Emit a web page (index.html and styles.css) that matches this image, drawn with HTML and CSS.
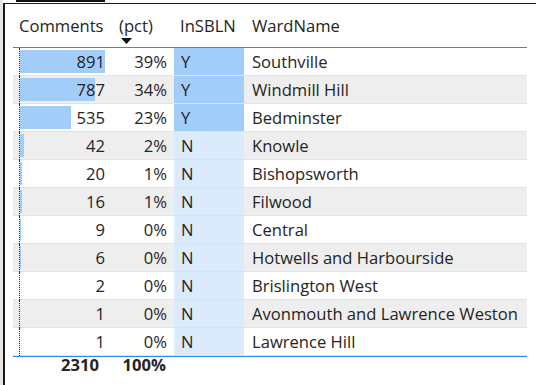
FILE: index.html
```html
<!DOCTYPE html>
<html>
<head>
<meta charset="utf-8">
<link rel="stylesheet" href="styles.css">
</head>
<body>
<div class="tab"></div>
<div class="frame">
  <div class="table">
    <div class="head">
      <div class="hcell">Comments</div>
      <div class="hcell sorted">
        <span>(pct)</span>
        <svg class="sort" width="11" height="6" viewBox="0 0 11 6"><path d="M0 0H11L5.5 6Z" fill="#111"/></svg>
      </div>
      <div class="hcell">InSBLN</div>
      <div class="hcell ward">WardName</div>
    </div>

    <div class="row">
      <div class="cell num com"><div class="bar" style="width:85px"></div><span class="val">891</span></div>
      <div class="cell num">39%</div>
      <div class="cell flag yes">Y</div>
      <div class="cell ward">Southville</div>
    </div>
    <div class="row alt">
      <div class="cell num com"><div class="bar" style="width:75px"></div><span class="val">787</span></div>
      <div class="cell num">34%</div>
      <div class="cell flag yes">Y</div>
      <div class="cell ward">Windmill Hill</div>
    </div>
    <div class="row">
      <div class="cell num com"><div class="bar" style="width:51px"></div><span class="val">535</span></div>
      <div class="cell num">23%</div>
      <div class="cell flag yes">Y</div>
      <div class="cell ward">Bedminster</div>
    </div>
    <div class="row alt">
      <div class="cell num com"><div class="bar" style="width:4px"></div><span class="val">42</span></div>
      <div class="cell num">2%</div>
      <div class="cell flag no">N</div>
      <div class="cell ward">Knowle</div>
    </div>
    <div class="row">
      <div class="cell num com"><div class="bar" style="width:2px"></div><span class="val">20</span></div>
      <div class="cell num">1%</div>
      <div class="cell flag no">N</div>
      <div class="cell ward">Bishopsworth</div>
    </div>
    <div class="row alt">
      <div class="cell num com"><div class="bar" style="width:1.5px"></div><span class="val">16</span></div>
      <div class="cell num">1%</div>
      <div class="cell flag no">N</div>
      <div class="cell ward">Filwood</div>
    </div>
    <div class="row">
      <div class="cell num com"><div class="bar" style="width:1px"></div><span class="val">9</span></div>
      <div class="cell num">0%</div>
      <div class="cell flag no">N</div>
      <div class="cell ward">Central</div>
    </div>
    <div class="row alt">
      <div class="cell num com"><div class="bar" style="width:0.5px"></div><span class="val">6</span></div>
      <div class="cell num">0%</div>
      <div class="cell flag no">N</div>
      <div class="cell ward">Hotwells and Harbourside</div>
    </div>
    <div class="row">
      <div class="cell num com"><div class="bar" style="width:0px"></div><span class="val">2</span></div>
      <div class="cell num">0%</div>
      <div class="cell flag no">N</div>
      <div class="cell ward">Brislington West</div>
    </div>
    <div class="row alt">
      <div class="cell num com"><div class="bar" style="width:0px"></div><span class="val">1</span></div>
      <div class="cell num">0%</div>
      <div class="cell flag no">N</div>
      <div class="cell ward">Avonmouth and Lawrence Weston</div>
    </div>
    <div class="row">
      <div class="cell num com"><div class="bar" style="width:0px"></div><span class="val">1</span></div>
      <div class="cell num">0%</div>
      <div class="cell flag no">N</div>
      <div class="cell ward">Lawrence Hill</div>
    </div>

    <div class="total">
      <div class="tcell tcom">2310</div>
      <div class="tcell tpct">100%</div>
      <div class="tcell"></div>
      <div class="tcell"></div>
    </div>
  </div>
</div>
</body>
</html>
```

FILE: styles.css
```css
html, body {
  margin: 0;
  padding: 0;
  background: #ffffff;
}
body {
  font-family: "Open Sans", "Liberation Sans", sans-serif;
  font-size: 16.6px;
  color: #252423;
  border-left: 3px solid #e6e6e6;
  height: 385px;
  box-sizing: border-box;
  overflow: hidden;
}
.tab {
  margin-left: 13px;
  width: 89px;
  height: 2px;
  background: #111;
  margin-bottom: 1px;
}
.frame {
  border-left: 2px solid #1a1a1a;
  border-top: 1px solid #1a1a1a;
  padding-left: 8px;
  height: 382px;
  box-sizing: border-box;
}
.table {
  width: 514px;
}
.head, .row, .total {
  display: grid;
  grid-template-columns: 98px 63px 70px 283px;
}
.head {
  height: 43px;
  border-bottom: 1px solid #2d8ceb;
}
.hcell {
  padding-top: 12px;
  line-height: 20px;
  padding-left: 6px;
  white-space: nowrap;
}
.hcell.sorted {
  padding-left: 8px;
  display: flex;
  flex-direction: column;
  align-items: flex-start;
}
.hcell.ward {
  padding-left: 8px;
}
.sort {
  margin-top: 2px;
  margin-left: 2px;
  display: block;
}
.row {
  height: 28px;
  box-sizing: border-box;
  border-bottom: 1px solid #e2e2e2;
  background: #ffffff;
}
.row.alt {
  background: #eeeeee;
}
.cell {
  display: flex;
  align-items: center;
  line-height: 20px;
  padding-top: 1px;
  white-space: nowrap;
}
.cell.num {
  justify-content: flex-end;
  padding-right: 7px;
}
.cell.com {
  position: relative;
  padding-right: 6px;
}
.cell.com::before {
  content: "";
  position: absolute;
  left: 6px;
  top: 0;
  bottom: -1px;
  border-left: 1px dotted #222;
}
.bar {
  position: absolute;
  left: 7px;
  top: 2px;
  bottom: 2px;
  background: #a3cdf9;
}
.val {
  position: relative;
}
.cell.flag {
  padding-left: 7px;
}
.cell.yes {
  background: #a3cdf9;
}
.cell.no {
  background: #dcebfc;
}
.cell.ward {
  padding-left: 8px;
}
.total {
  border-top: 1px solid #2d8ceb;
  height: 28px;
  font-weight: 700;
}
.tcell {
  line-height: 20px;
  margin-top: -2px;
  text-align: right;
}
.tcom {
  padding-right: 12px;
}
.tpct {
  padding-right: 8px;
}
```
